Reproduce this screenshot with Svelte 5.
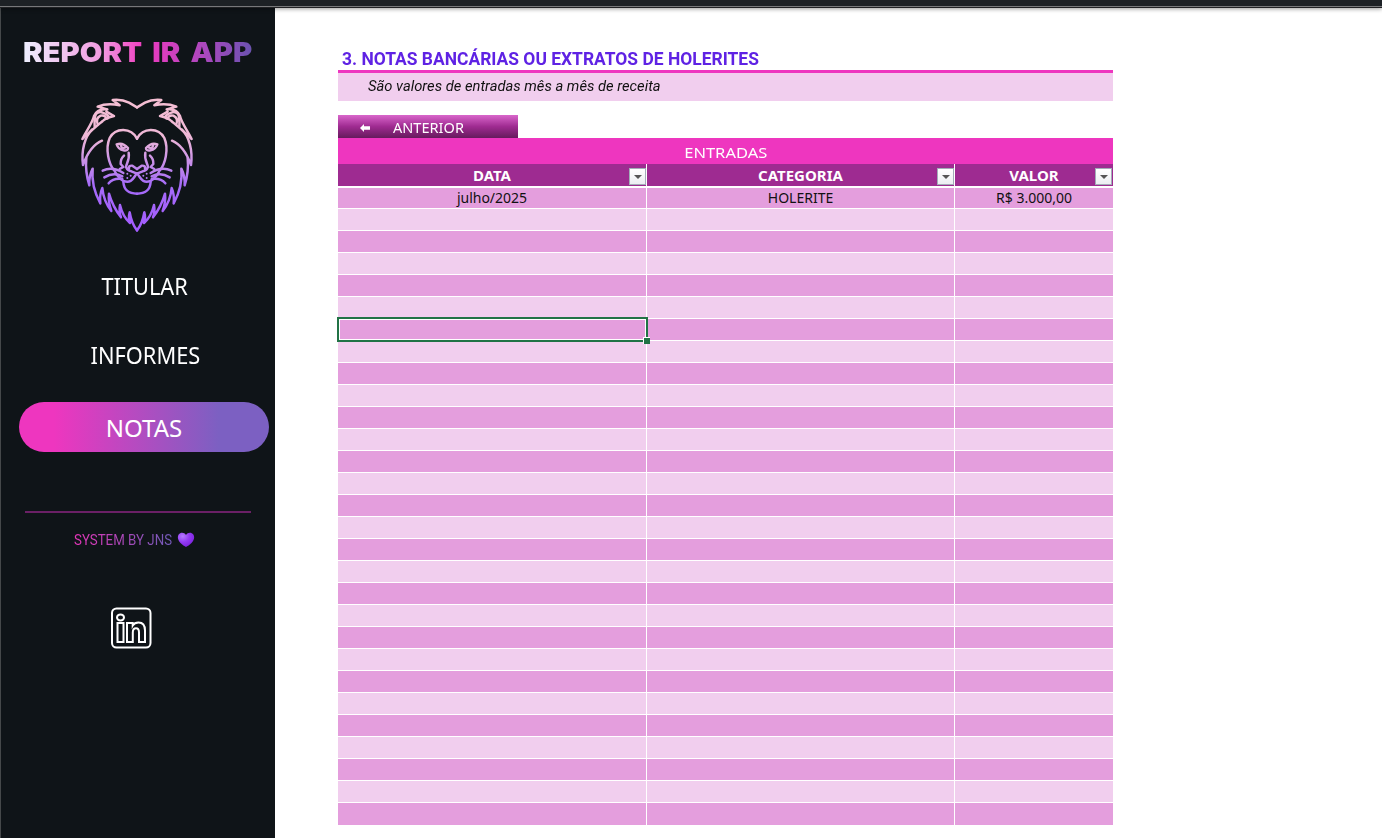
<script>
  const headers = ['DATA', 'CATEGORIA', 'VALOR'];
  const first = ['julho/2025', 'HOLERITE', 'R$ 3.000,00'];
  const rows = Array.from({ length: 29 }, (_, i) => (i === 0 ? first : ['', '', '']));
  const half = [
    'M201 52 L177 38 Q155 27 128 30 L149 46 Q112 38 83 50 L112 58 Q82 54 72 78 C67 100 50 120 37 147 C61 124 78 110 98 93 Q108 83 132 78 L109 65',
    'M75 76 Q84 62 98 68 Q121 76 113 85',
    'M76 76 Q72 96 74 110 M83 103 Q76 85 92 77 Q106 74 109 86',
    'M66 119 C45 140 33 180 39 225 C50 195 69 163 96 152',
    'M49 204 Q45 245 58 286 Q56 260 68 236 Q63 290 91 340 Q88 315 97 294 Q101 335 124 363 Q114 335 117 311 Q128 350 153 382 Q146 365 150 345 Q158 380 180 399 Q174 384 179 367 Q185 402 201 421',
    'M201 146 C183 112 137 112 119 144 C105 177 116 224 134 243 Q141 259 160 273 C188 282 190 261 201 251',
    'M140 163 Q158 156 174 174 Q174 184 160 181 Q146 179 140 163 Z M153 166 Q154 177 165 173',
    'M176 188 C180 210 168 222 168 231 Q173 243 184 244 L201 251 M177 236 Q175 226 187 227 L201 237',
    'M162 197 Q151 207 152 222 L160 231 L149 237',
    'M98 242 Q127 228 160 249 M103 262 Q131 245 157 259 M116 280 Q130 263 157 267',
    'M160 276 C162 302 180 311 201 311'
  ];
</script>

<div class="ribbon"></div>
<div class="page">
  <aside>
    <h1><span>REPORT IR APP</span></h1>
    <svg class="lion" viewBox="0 0 405 450" width="135" height="150">
      <defs>
        <linearGradient id="mane" gradientUnits="userSpaceOnUse" x1="0" y1="30" x2="0" y2="420">
          <stop offset="0" stop-color="#f5bfd3" /><stop offset=".28" stop-color="#efb8d7" />
          <stop offset=".65" stop-color="#a66cf8" /><stop offset="1" stop-color="#a35cff" />
        </linearGradient>
      </defs>
      <g id="half" fill="none" stroke="url(#mane)" stroke-width="7.4" stroke-linecap="round" stroke-linejoin="round">
        {#each half as d}<path {d} />{/each}
        <g fill="url(#mane)" stroke="none"><circle cx="172" cy="251" r="3" /><circle cx="182" cy="257" r="3" /><circle cx="172" cy="264" r="3" /></g>
      </g>
      <use href="#half" transform="translate(402 0) scale(-1 1)" />
    </svg>
    <nav>
      <a class="item"><span class="narrow">TITULAR</span></a>
      <a class="item"><span class="narrow">INFORMES</span></a>
      <a class="item active"><span>NOTAS</span></a>
    </nav>
    <hr />
    <div class="credit">
      <span>SYSTEM BY JNS</span>
      <svg width="18" height="16" viewBox="0 0 18 16">
        <defs><radialGradient id="heart" cx=".3" cy=".25" r=".8"><stop offset="0" stop-color="#b57bff" /><stop offset=".5" stop-color="#933bf3" /><stop offset="1" stop-color="#7b20dc" /></radialGradient></defs>
        <path d="M9 3C7.500.2 3.500 0 1.800 2.300-.2 5.200 1.200 8.500 3.500 11 5.300 13 7.500 14.200 9 15c1.500-.8 3.700-2 5.500-4 2.300-2.500 3.700-5.800 1.700-8.700C14.500 0 10.500.2 9 3Z" fill="url(#heart)" />
      </svg>
    </div>
    <svg class="linkedin" width="42" height="42" viewBox="0 0 42 42" fill="none" stroke="#fff" stroke-width="2">
      <rect x="2" y="1.500" width="38.500" height="39" rx="4.500" />
      <ellipse cx="10.500" cy="10.500" rx="3.500" ry="3" />
      <path d="M7.500 16h6v19h-6zM17 16h5.700v2.600c1.200-2 3.200-3 5.800-3 4.300 0 6.500 3 6.500 8V35h-6V25.500c0-2.700-.9-4.200-3-4.200-2.200 0-3.200 1.700-3.200 4.200V35H17z" />
    </svg>
  </aside>
  <main>
    <h2><span>3. NOTAS BANCÁRIAS OU EXTRATOS DE HOLERITES</span></h2>
    <div class="note"><span>São valores de entradas mês a mês de receita</span></div>
    <button class="back">
      <svg width="10" height="8" viewBox="0 0 10 8"><path d="M0 4 4 0v2.300h6v3.400H4V8Z" fill="#fff" /></svg>
      <span>ANTERIOR</span>
    </button>
    <div class="caption"><span>ENTRADAS</span></div>
    <div class="row head">
      {#each headers as h}
        <div class="cell"><span>{h}</span><i><svg width="8" height="4" viewBox="0 0 8 4"><path d="M0 0h8L4 4Z" fill="#555" /></svg></i></div>
      {/each}
    </div>
    {#each rows as r, i}
      <div class="row" class:first={i === 0} class:light={i % 2 === 1} class:last={i === 28}>
        {#each r as c, j}
          <div class="cell" class:selected={i === 6 && j === 0}><span>{c}</span>{#if i === 6 && j === 0}<b class="selection"></b>{/if}</div>
        {/each}
      </div>
    {/each}
  </main>
</div>

<style>
  :global(body) { margin: 0; background: #fff; overflow: hidden; }
  * { box-sizing: border-box; }
  span { display: inline-block; white-space: nowrap; }
  .ribbon { height: 8px; background: #1d2125; border-bottom: 1px solid #202124; box-shadow: inset 0 -1px #77787a, 0 1px 4px #0006; position: relative; z-index: 1; }
  .page { display: flex; height: 830px; font-family: 'Noto Sans', 'Open Sans', sans-serif; }
  aside { width: 275px; flex: none; background: #0f1418; border-left: 1px solid #45484a; display: flex; flex-direction: column; }
  h1 { margin: 28px 0 0 22px; height: 34px; font: 900 27px/34px Inter, sans-serif; }
  h1 span { word-spacing: 4px; transform: scaleX(1.084); transform-origin: 0 0; background: linear-gradient(90deg, #eef0ff 0, #f19be0 34%, #ef3abf 53%, #a848bd 80%, #6b52b0 100%); background-clip: text; -webkit-text-fill-color: transparent; }
  .lion { margin: 20px 0 0 69px; flex: none; }
  nav { display: flex; flex-direction: column; margin: 11px 0 0 18px; width: 250px; }
  .item { height: 69px; display: flex; align-items: center; justify-content: center; color: #fff; font-size: 24px; }
  .item:first-child, .item:nth-child(2) { padding-left: 2px; }
  .narrow { transform: scaleX(0.908); }
  .item.active { margin-top: 13px; height: 50px; border-radius: 25px; background: linear-gradient(90deg, #ee36bf 0 14%, #7c60c2 80%); }
  hr { margin: 59px 0 0 24px; width: 226px; height: 2px; border: 0; background: #6b2066; flex: none; }
  .credit { display: flex; align-items: center; margin: 17px 0 0 73px; height: 20px; font: 14px/20px Roboto, sans-serif; }
  .credit span { transform: scaleX(0.95); transform-origin: 0 0; background: linear-gradient(90deg, #e535b8, #6f5bb8); background-clip: text; -webkit-text-fill-color: transparent; }
  .linkedin { margin: 57px 0 0 109px; }
  main { margin-left: 63px; width: 775px; padding-top: 40px; }
  h2 { margin: 0; height: 22px; padding-left: 4px; font: 700 18px/22px Roboto, sans-serif; color: #5f22e4; }
  h2 span { transform: scaleX(0.969); transform-origin: 0 0; }
  .note { height: 31px; border-top: 3px solid #ee36bf; background: #f1ceee; padding-left: 30px; font: italic 14px/26px Roboto, sans-serif; color: #111; }
  .note span { transform: scaleX(1.054); transform-origin: 0 0; }
  .back { display: flex; align-items: center; gap: 23px; width: 180px; height: 23px; margin-top: 14px; padding: 2px 0 0 22px; border: 0; color: #fff; font: 15px/20px 'Noto Sans', sans-serif; background: linear-gradient(#d966cb, #9f2b91 50%, #661a5d); }
  .back span { margin-top: -2px; transform: scaleX(0.97); transform-origin: 0 0; }
  .caption { height: 26px; padding-top: 3px; background: #ee36bf; color: #fff; text-align: center; font-size: 15px; line-height: 22px; }
  .caption span { transform: scaleX(1.1); }
  .row { display: grid; grid-template-columns: 308px 307px 158px; column-gap: 1px; height: 21px; margin-bottom: 1px; }
  .cell { position: relative; background: #e49edd; text-align: center; font-size: 14px; line-height: 20px; color: #111; }
  .light .cell { background: #f1ceee; }
  .first { height: 20px; }
  .first .cell { line-height: 19px; }
  .last { height: 22px; }
  .head { margin-bottom: 3px; }
  .head .cell { background: #9e2b91; color: #fff; font-weight: 700; font-size: 15px; line-height: 22px; }
  .head i { position: absolute; right: 0; top: 4px; width: 17px; height: 17px; border: 1px solid #a3adb8; background: linear-gradient(#fff, #eceef2); display: flex; align-items: center; justify-content: center; padding-top: 1px; }
  .head .cell:last-child i { right: 1px; }
  .selected { z-index: 1; }
  .selection { position: absolute; inset: -2px -2px -2px -1px; border: 2px solid #217346; box-shadow: inset 0 0 0 1px #fff; }
  .selection::after { content: ''; position: absolute; right: -4px; bottom: -4px; width: 6px; height: 6px; background: #217346; border: 1px solid #fff; border-width: 1px 0 0 1px; }
</style>
